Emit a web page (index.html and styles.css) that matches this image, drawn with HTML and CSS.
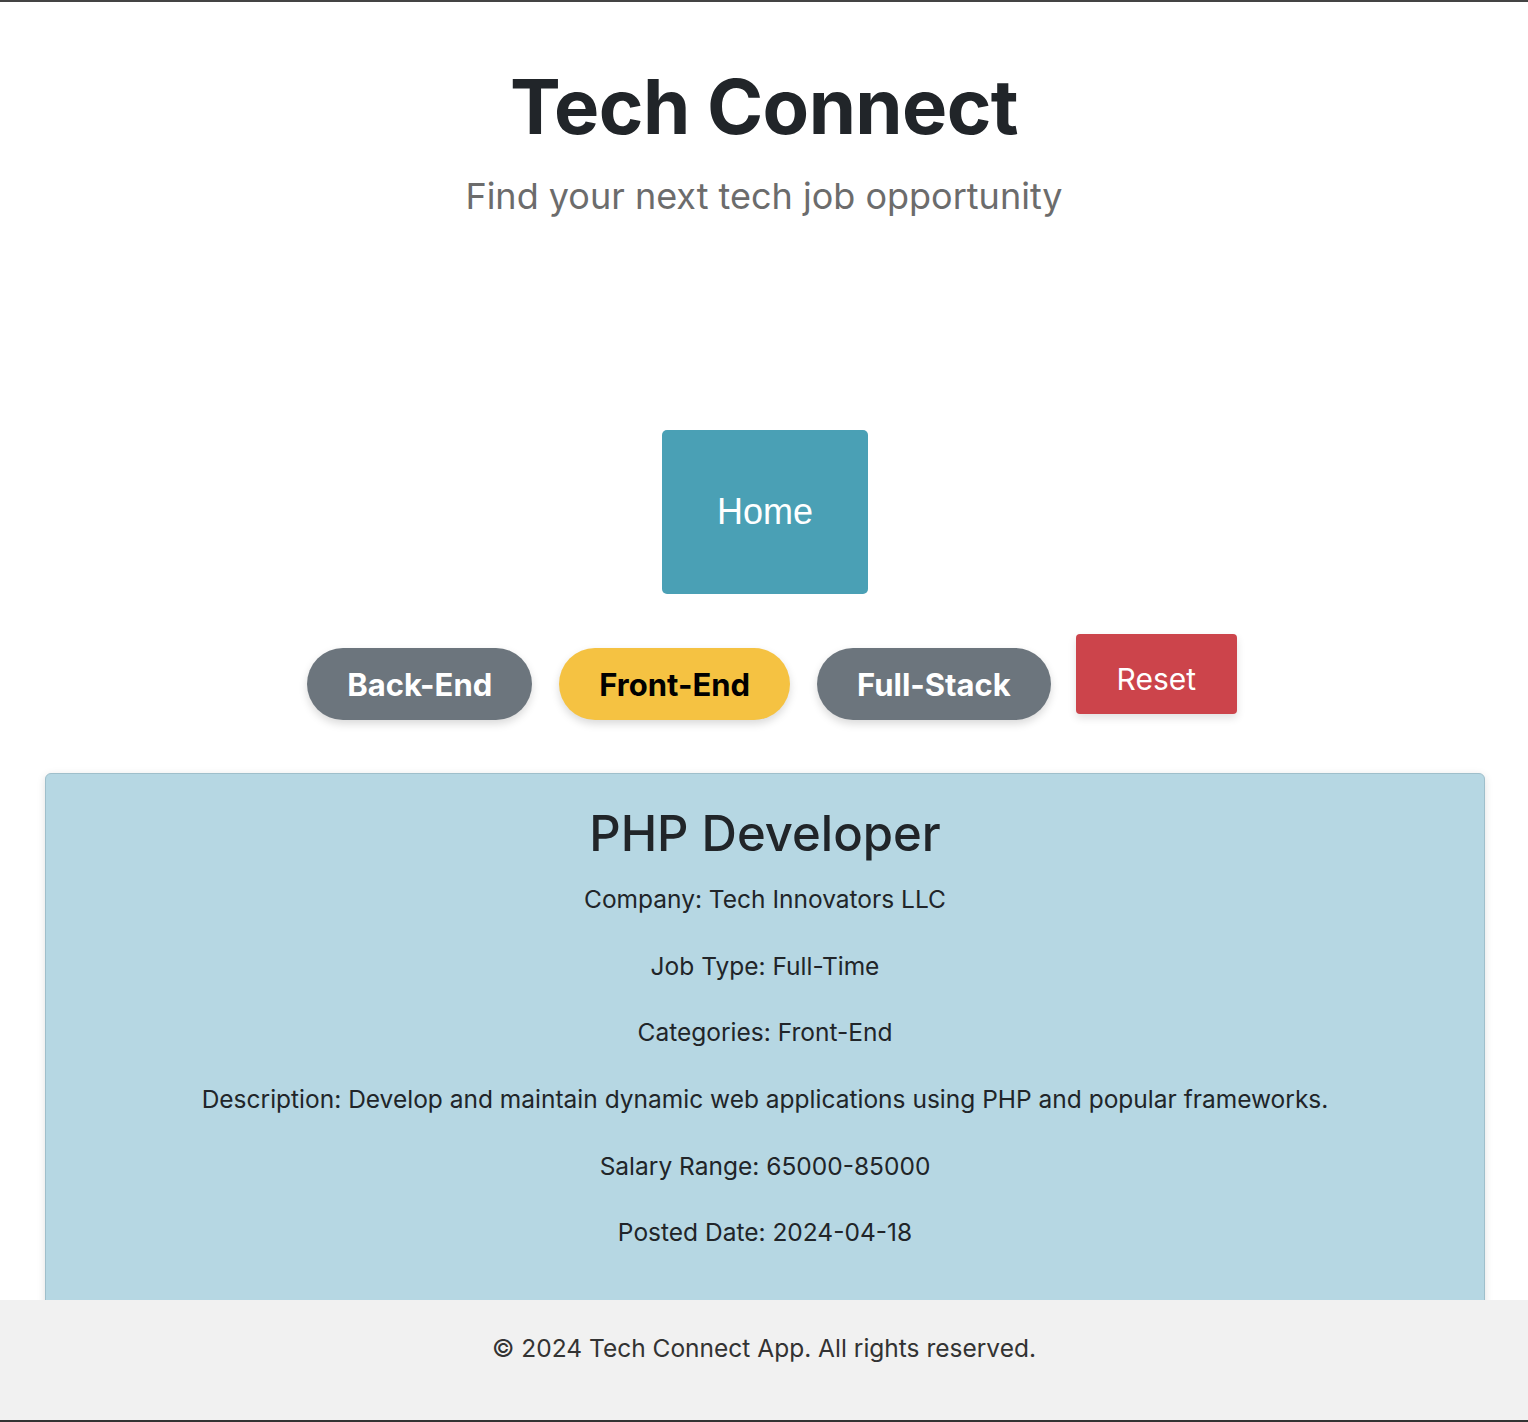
FILE: index.html
```html
<!DOCTYPE html>
<html lang="en">
<head>
<meta charset="utf-8">
<title>Tech Connect</title>
<link rel="stylesheet" href="styles.css">
</head>
<body>
<header class="header">
  <h1 class="title">Tech Connect</h1>
  <p class="subtitle">Find your next tech job opportunity</p>
</header>
<nav class="nav">
  <a class="home-btn" href="#">Home</a>
</nav>
<div class="filters">
  <button class="pill pill-gray">Back-End</button>
  <button class="pill pill-yellow">Front-End</button>
  <button class="pill pill-gray">Full-Stack</button>
  <button class="reset">Reset</button>
</div>
<main class="jobs">
  <article class="card">
    <h2 class="card-title">PHP Developer</h2>
    <p>Company: Tech Innovators LLC</p>
    <p>Job Type: Full-Time</p>
    <p>Categories: Front-End</p>
    <p>Description: Develop and maintain dynamic web applications using PHP and popular frameworks.</p>
    <p>Salary Range: 65000-85000</p>
    <p>Posted Date: 2024-04-18</p>
  </article>
</main>
<footer class="footer">
  <p>© 2024 Tech Connect App. All rights reserved.</p>
</footer>
</body>
</html>
```

FILE: styles.css
```css
html, body {
  margin: 0;
  padding: 0;
}
body {
  font-family: Inter, "Noto Sans", sans-serif;
  color: #212529;
  background: #fff;
  border-top: 2px solid #444;
  min-height: 1420px;
  box-sizing: border-box;
}
.header {
  text-align: center;
  padding-top: 58px;
}
.title {
  margin: 0;
  font-size: 76px;
  line-height: 92px;
  font-weight: 700;
  letter-spacing: -0.6px;
  color: #212529;
}
.subtitle {
  margin: 20px 0 0;
  font-size: 36px;
  line-height: 48px;
  color: #6c6c6c;
}
.nav {
  display: flex;
  justify-content: center;
  margin-top: 210px;
  padding-left: 2px;
}
.home-btn {
  display: flex;
  align-items: center;
  justify-content: center;
  width: 206px;
  height: 164px;
  background: #4aa0b5;
  color: #fff;
  text-decoration: none;
  font-family: "Liberation Sans", Arial, sans-serif;
  font-size: 36px;
  border-radius: 5px;
}
.filters {
  display: flex;
  justify-content: center;
  align-items: flex-start;
  gap: 27px;
  margin-top: 40px;
  padding-left: 16px;
}
.pill {
  margin-top: 14px;
  height: 72px;
  padding: 0 40px;
  border: none;
  border-radius: 36px;
  font-family: Inter, sans-serif;
  font-weight: 700;
  font-size: 31px;
  box-shadow: 0 4px 8px rgba(0,0,0,0.15);
}
.pill-gray {
  background: #6c757d;
  color: #fff;
}
.pill-yellow {
  background: #f5c242;
  color: #000;
}
.reset {
  margin-left: -2px;
  height: 80px;
  width: 161px;
  border: none;
  border-radius: 4px;
  background: #cc444b;
  color: #fff;
  font-family: Inter, sans-serif;
  font-size: 30px;
  padding: 10px 0 0;
  box-shadow: 0 4px 8px rgba(0,0,0,0.12);
}
.jobs {
  margin: 53px 43px 0 45px;
}
.card {
  background: #b6d7e3;
  border: 1px solid #9fbfcb;
  border-radius: 6px;
  box-shadow: 0 2px 8px rgba(0,0,0,0.12);
  text-align: center;
  padding: 28px 20px 40px;
  min-height: 560px;
}
.card-title {
  margin: 0 0 15px;
  font-size: 49px;
  line-height: 64px;
  font-weight: 500;
  color: #212529;
}
.card p {
  margin: 0 0 30.67px;
  font-size: 24.5px;
  line-height: 36px;
}
.footer {
  position: fixed;
  left: 0;
  right: 0;
  bottom: 0;
  height: 120px;
  box-sizing: content-box;
  background: #f1f1f1;
  border-bottom: 2px solid #333;
  text-align: center;
}
.footer p {
  margin: 0;
  padding-top: 32px;
  font-size: 24.5px;
  line-height: 32px;
  color: #333;
}
```
